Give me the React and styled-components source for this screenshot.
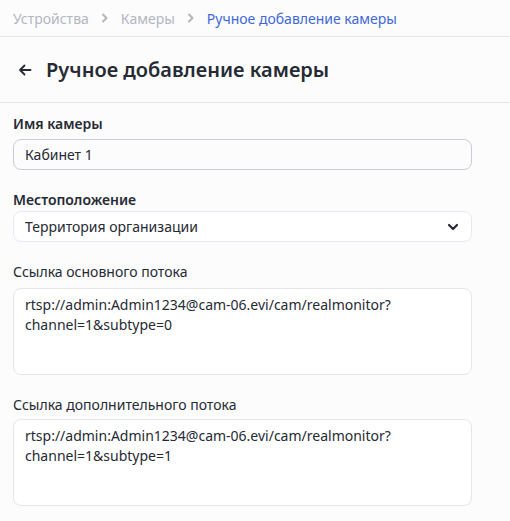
import React from "react";
import styled, { createGlobalStyle } from "styled-components";

const GlobalStyle = createGlobalStyle`
  body {
    margin: 0;
    background: #fcfcfd;
    font-family: "Noto Sans", "Open Sans", sans-serif;
    color: #262a33;
  }
`;

const Page = styled.div`
  width: 510px;
`;

const Breadcrumbs = styled.nav`
  display: flex;
  align-items: center;
  height: 36px;
  padding: 0 13px;
  border-bottom: 1px solid #e4e5e8;
  font-size: 14px;
`;

const Crumb = styled.span`
  color: ${(p) => (p.$active ? "#3f68d8" : "#b2b6be")};
`;

const Separator = styled.span`
  display: flex;
  align-items: center;
  margin: 0 11px;
  color: #b2b6be;
`;

const Header = styled.header`
  display: flex;
  align-items: center;
  height: 65px;
  padding: 0 18px;
  border-bottom: 1px solid #e4e5e8;
`;

const BackButton = styled.button`
  display: flex;
  align-items: center;
  padding: 0;
  margin-right: 14px;
  border: none;
  background: none;
  color: #262a33;
`;

const Title = styled.h1`
  margin: 0;
  font-size: 20px;
  font-weight: 600;
  color: #262a33;
`;

const Form = styled.form`
  display: flex;
  flex-direction: column;
  padding: 11px 38px 14px 13px;
`;

const Field = styled.div`
  display: flex;
  flex-direction: column;
  margin-bottom: 20px;
`;

const Label = styled.label`
  font-size: 14px;
  line-height: 20px;
  font-weight: ${(p) => (p.$strong ? 600 : 400)};
  margin-bottom: ${(p) => p.$gap}px;
  color: #262a33;
`;

const TextInput = styled.input`
  box-sizing: border-box;
  height: 31px;
  padding: 0 11px;
  border: 1px solid #c8ccd4;
  border-radius: 8px;
  background: #fcfcfd;
  font-family: inherit;
  font-size: 14px;
  color: #262a33;
  outline: none;
`;

const SelectBox = styled.div`
  box-sizing: border-box;
  display: flex;
  align-items: center;
  justify-content: space-between;
  height: 31px;
  padding: 0 12px 0 11px;
  border: 1px solid #e4e9f3;
  border-radius: 8px;
  background: #fff;
  font-size: 14px;
`;

const TextArea = styled.textarea`
  box-sizing: border-box;
  height: 87px;
  padding: 6px 11px;
  border: 1px solid #e4e6ea;
  border-radius: 8px;
  background: #fff;
  font-family: inherit;
  font-size: 14px;
  line-height: 20px;
  color: #262a33;
  resize: none;
  outline: none;
`;

const Chevron = ({ size = 10, width = 2 }) => (
  <svg width={size} height={size} viewBox="0 0 10 10" fill="none">
    <path
      d="M3 1.5 L6.5 5 L3 8.5"
      stroke="currentColor"
      strokeWidth={width}
      strokeLinecap="round"
      strokeLinejoin="round"
    />
  </svg>
);

const ArrowLeft = () => (
  <svg width="14" height="14" viewBox="0 0 14 14" fill="none">
    <path
      d="M12.5 7 H2 M6.5 2.5 L2 7 L6.5 11.5"
      stroke="currentColor"
      strokeWidth="1.8"
      strokeLinecap="round"
      strokeLinejoin="round"
    />
  </svg>
);

const ChevronDown = () => (
  <svg width="12" height="8" viewBox="0 0 12 8" fill="none">
    <path
      d="M2 2 L6 6 L10 2"
      stroke="#262a33"
      strokeWidth="2.2"
      strokeLinecap="round"
      strokeLinejoin="round"
    />
  </svg>
);

const mainStream = "rtsp://admin:Admin1234@cam-06.evi/cam/realmonitor?channel=1&subtype=0";
const subStream = "rtsp://admin:Admin1234@cam-06.evi/cam/realmonitor?channel=1&subtype=1";

function App() {
  return (
    <Page>
      <GlobalStyle />
      <Breadcrumbs>
        <Crumb>Устройства</Crumb>
        <Separator>
          <Chevron />
        </Separator>
        <Crumb>Камеры</Crumb>
        <Separator>
          <Chevron />
        </Separator>
        <Crumb $active>Ручное добавление камеры</Crumb>
      </Breadcrumbs>

      <Header>
        <BackButton type="button">
          <ArrowLeft />
        </BackButton>
        <Title>Ручное добавление камеры</Title>
      </Header>

      <Form>
        <Field>
          <Label $strong $gap={5}>Имя камеры</Label>
          <TextInput defaultValue="Кабинет 1" />
        </Field>
        <Field>
          <Label $strong $gap={1}>Местоположение</Label>
          <SelectBox>
            <span>Территория организации</span>
            <ChevronDown />
          </SelectBox>
        </Field>
        <Field>
          <Label $gap={6}>Ссылка основного потока</Label>
          <TextArea defaultValue={mainStream} />
        </Field>
        <Field>
          <Label $gap={4}>Ссылка дополнительного потока</Label>
          <TextArea defaultValue={subStream} />
        </Field>
      </Form>
    </Page>
  );
}

export default App;
